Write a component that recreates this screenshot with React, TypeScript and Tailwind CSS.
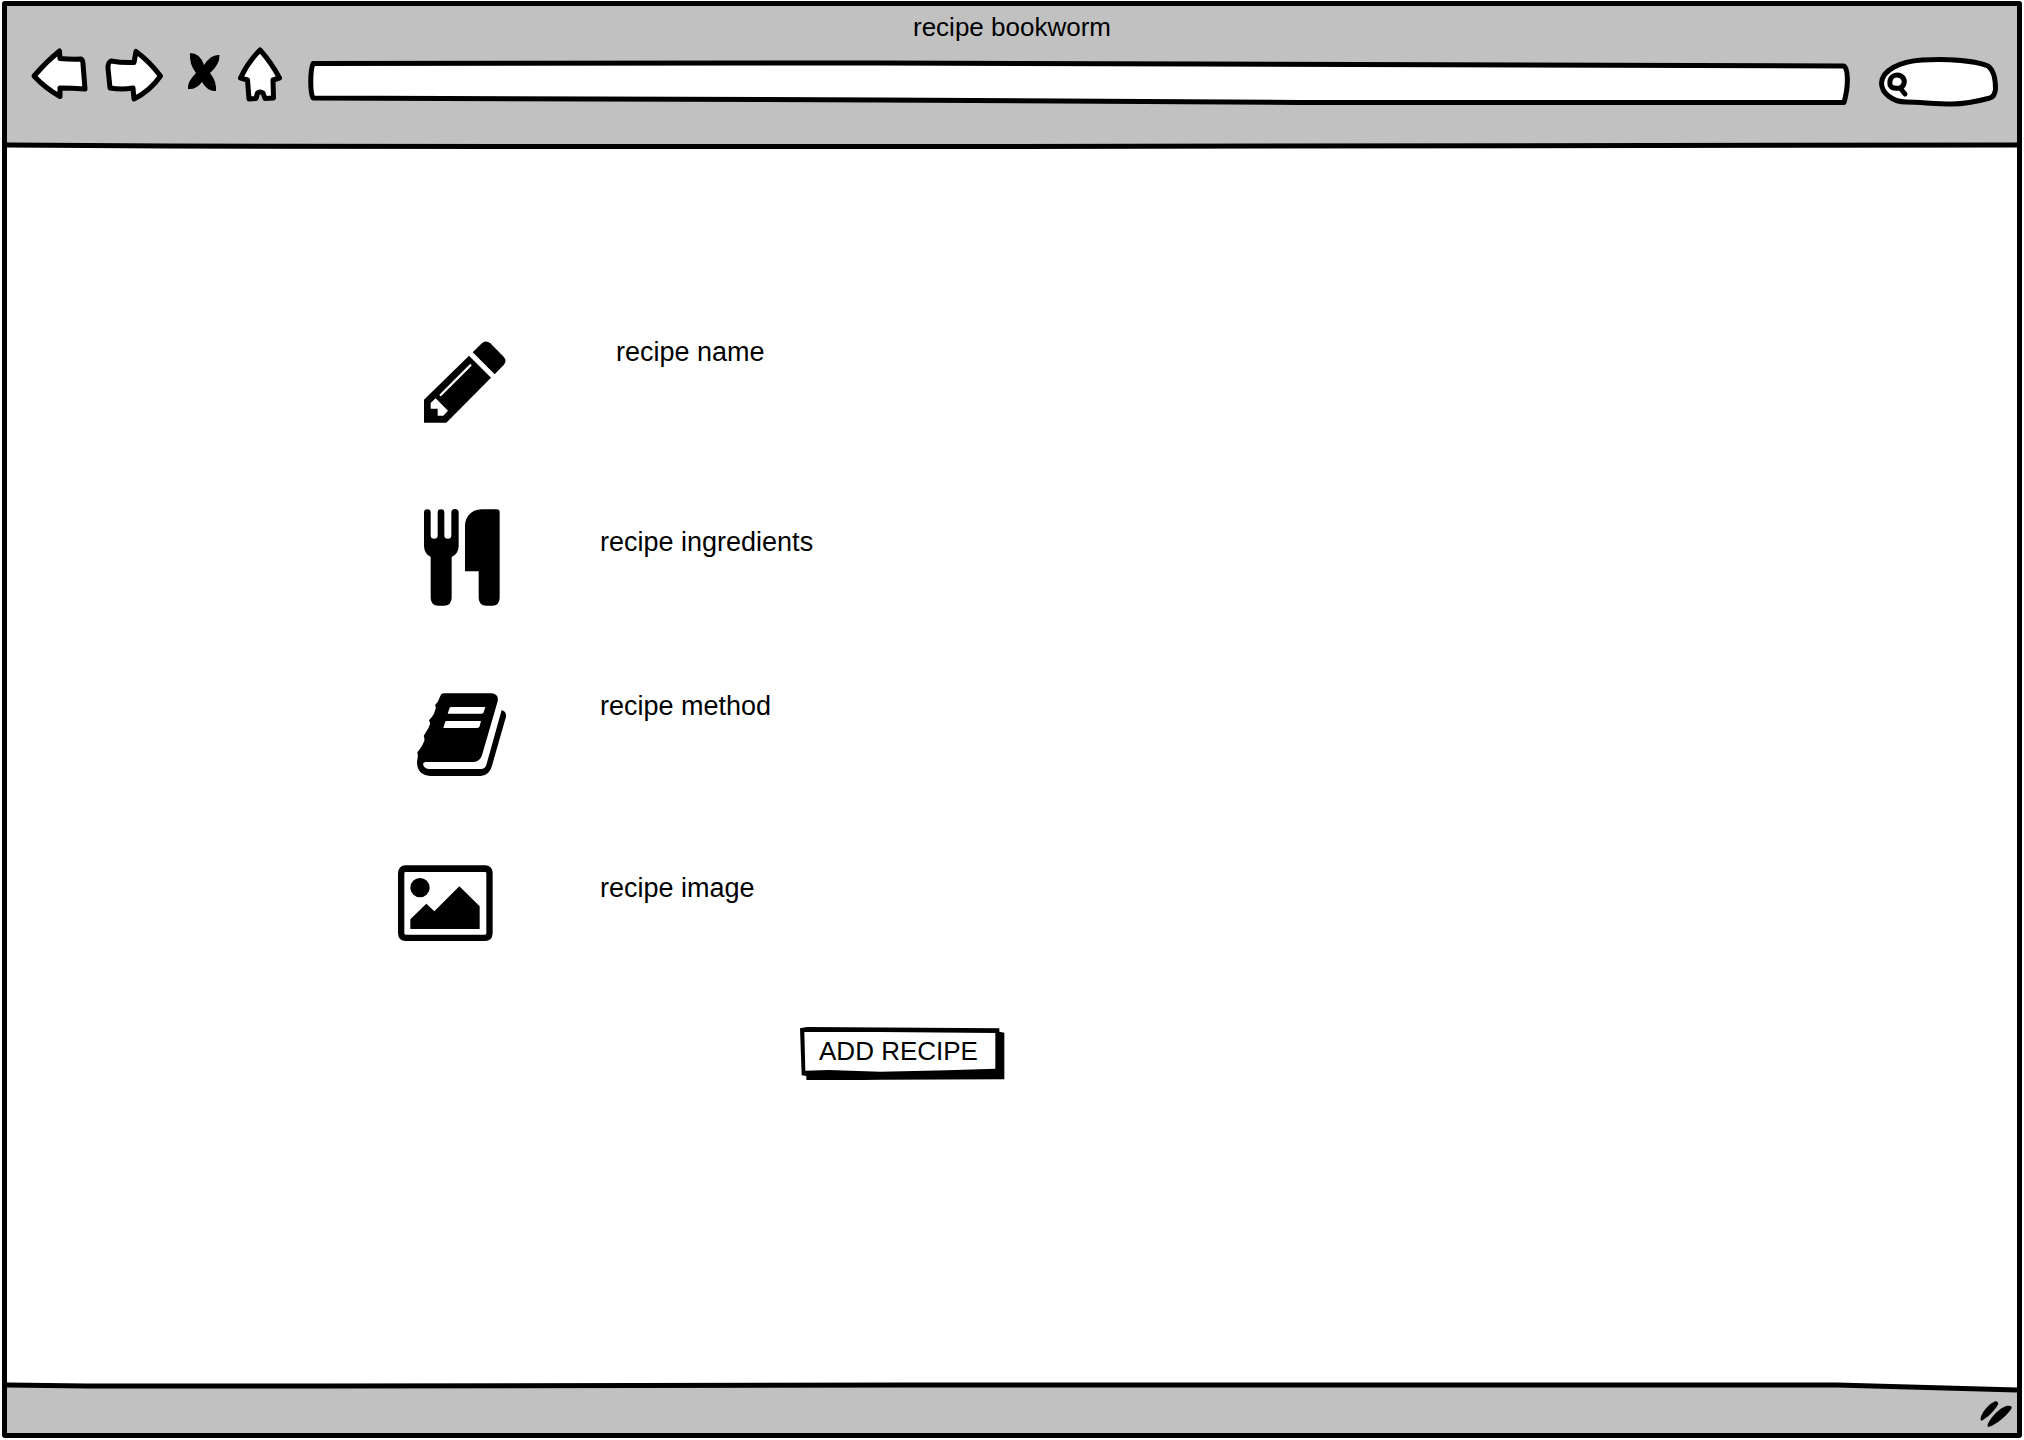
import type { ReactNode } from "react";

const outline = {
  fill: "#fff",
  stroke: "#000",
  strokeWidth: 5,
  strokeLinejoin: "round" as const,
  strokeLinecap: "round" as const,
};

function ToolButton({ label, children }: { label: string; children: ReactNode }) {
  return (
    <button type="button" aria-label={label} className="block shrink-0 cursor-pointer">
      {children}
    </button>
  );
}

function TitleBar() {
  return (
    <header className="relative h-[143px] bg-[#c1c1c1] pt-[11px]">
      <svg
        aria-hidden="true"
        className="absolute inset-x-0 bottom-0 h-2 w-full"
        viewBox="0 0 2010 8"
        preserveAspectRatio="none"
      >
        <path d="M0 4 L160 5 L500 5.500 L1000 5.500 L2010 4 V8 H0Z" fill="#fff" />
        <path d="M0 4 L160 5 L500 5.500 L1000 5.500 L2010 4" fill="none" stroke="#000" strokeWidth="5" />
      </svg>
      <h1 className="text-center text-[26px] leading-5">recipe bookworm</h1>
      <div className="mt-[9px] flex gap-3 pl-[23px] pr-[15px]">
        <ToolButton label="Back">
          <svg className="h-[60px] w-[62px]" viewBox="30 46 62 60">
            <path {...outline} d="M34 75 Q46 61 59.500 50 L60 57.500 Q71 58.500 81 58 Q83 59 83 63 L85 88 Q72 87 60 87 L60 95.500 Q45 87 34 75Z" />
          </svg>
        </ToolButton>
        <ToolButton label="Forward">
          <svg className="h-[60px] w-[64px]" viewBox="104 46 64 60">
            <path {...outline} d="M160.500 75 Q149 60 136 50.500 L134 61.500 Q122 62 111 60 Q108 61 108 67 L110 87 Q122 89 133 87 L134 98 Q150 90 160.500 75Z" />
          </svg>
        </ToolButton>
        <ToolButton label="Stop">
          <svg className="h-[60px] w-[46px]" viewBox="180 46 46 60">
            <path d="M190 52 Q200 52 204 64 Q211 53 219.500 54 Q220 63 210 72 Q217 81 216 90 Q208 91 202 81 Q196 89 188 88 Q187 81 196 72 Q189 63 190 52Z" />
          </svg>
        </ToolButton>
        <ToolButton label="Home">
          <svg className="h-[60px] w-[56px]" viewBox="238 46 56 60">
            <path {...outline} d="M260 49 Q248 61 240.500 77 L247.500 79 L249 98 L256 97.500 L257.500 92 Q260.500 90 263 92 L265 97.500 L273.500 97 L273 79 L279.500 77 Q271 61 260 49Z" />
          </svg>
        </ToolButton>
        <div className="relative h-[60px] min-w-0 flex-1">
          <svg
            aria-hidden="true"
            className="absolute inset-0 h-full w-full"
            viewBox="306 46 1548 60"
            preserveAspectRatio="none"
          >
            <path {...outline} d="M313 63.500 L880 63 L1200 64 L1844 66 C1848 69 1849 85 1844 102.500 L1300 102.500 L880 100 L313 98 C310 92 310 72 313 63.500Z" />
          </svg>
          <input
            type="text"
            aria-label="Address"
            className="absolute inset-x-3 top-5 h-8 bg-transparent text-[26px] outline-none"
          />
        </div>
        <div className="relative h-[62px] w-[136px] shrink-0">
          <svg aria-hidden="true" className="absolute inset-0 h-full w-full" viewBox="1866 46 136 62">
            <path {...outline} d="M1906 102 C1894 102 1881.500 94 1881.500 83 C1882 70 1900 61.500 1922 60 C1950 58.500 1975 61 1988 66 C1995 71 1995.500 81 1995.500 89 C1995 95 1993 97 1990 98 C1975 102 1965 104 1952 104 C1935 104 1920 102 1906 102Z" />
            <path {...outline} d="M1900 88 C1892 89 1889 87 1890 81 C1891 75 1897 74 1901 76 C1906 79 1905 86 1900 88 L1905 94" />
          </svg>
          <input
            type="search"
            aria-label="Search"
            className="absolute left-12 top-5 h-8 w-[70px] bg-transparent text-[20px] outline-none"
          />
        </div>
      </div>
    </header>
  );
}

function PencilIcon() {
  return (
    <svg aria-hidden="true" className="h-[82px] w-[82px]" viewBox="72 61 246 246">
      <path d="M72 237 L207 105 L273 171 L139 306 H72Z" />
      <path d="M218 95 L244 69 Q257 57 271 68 L311 108 Q322 120 311 133 L284 161Z" />
      <path d="M92 247 L107 233 L144 270 L130 285 H113 V264 H92Z" fill="#fff" />
      <path d="M122 223 L211 134" stroke="#fff" strokeWidth="7" strokeLinecap="round" />
    </svg>
  );
}

function CutleryIcon() {
  return (
    <svg aria-hidden="true" className="h-[97px] w-[76px]" viewBox="72 55 228 291">
      <path d="M72 66 a10 10 0 0 1 20 0 V134 a10.500 10.500 0 0 0 21 0 V66 a10 10 0 0 1 20 0 V134 a10.500 10.500 0 0 0 21 0 V66 a11 11 0 0 1 22 0 V167 Q175 190 155 199 V322 Q154 345 132 345 H115 Q93 345 92 322 V199 Q73 189 72 167Z" />
      <path d="M195 104 C196 77 216 57 244 56 H290 Q299 56 299 65 V322 Q298 345 277 345 H259 Q237 345 236 322 V242 H195Z" />
    </svg>
  );
}

function BookIcon() {
  return (
    <svg aria-hidden="true" className="h-[83px] w-[90px]" viewBox="51 39 270 249">
      <path d="M133 40 H276 Q297 43 293 64 L246 226 Q240 245 220 246 H76 Q67 247 70 256 Q74 267 88 267 H243 Q255 267 259 255 L305 90 Q320 95 318 110 L276 257 Q268 286 242 288 H91 Q51 285 51 246 L53 232 Q54 224 52 217 L59 208 Q68 196 73 182 Q74 174 71 168 L78 156 Q87 144 90 132 Q90 126 87 121 L95 112 Q103 102 107 86 Q108 80 105 75 L113 66 L120 50 Q124 39 133 40Z" />
      <path d="M153 81 H256 L251 97 Q250 101 245 101 H143 L148 86 Q149 81 153 81Z M140 123 H243 L239 139 Q237 144 232 144 H130 L135 127 Q136 123 140 123Z" fill="#fff" />
    </svg>
  );
}

function PictureIcon() {
  return (
    <svg aria-hidden="true" className="h-[76px] w-[95px]" viewBox="54 42 285 228">
      <path
        fillRule="evenodd"
        d="M77 43 H315 Q338 44 338 67 V247 Q337 270 315 270 H77 Q55 270 54 247 V67 Q55 44 77 43Z M77 63 Q73 63 73 67 V247 Q73 251 77 251 H315 Q319 251 319 247 V67 Q319 63 315 63Z"
      />
      <circle cx="120" cy="110" r="29" />
      <path d="M91 205 L139 158 L163 181 L238 106 L299 166 V234 H91Z" />
    </svg>
  );
}

const fields = [
  { label: "recipe name", icon: <PencilIcon />, row: "h-[82px]", iconPad: "pl-[26px]", text: "pl-4" },
  { label: "recipe ingredients", icon: <CutleryIcon />, row: "h-[98px]", iconPad: "pl-[26px]", text: "pt-[22px]" },
  { label: "recipe method", icon: <BookIcon />, row: "h-[86px]", iconPad: "pl-[19px]", text: "pt-[2px]" },
  { label: "recipe image", icon: <PictureIcon />, row: "h-[76px]", iconPad: "pl-0", text: "pt-3" },
];

function StatusBar() {
  return (
    <footer className="relative flex h-[51px] items-center justify-end bg-[#c1c1c1] pr-[5px]">
      <svg
        aria-hidden="true"
        className="absolute inset-x-0 top-0 h-3 w-full"
        viewBox="0 0 2010 12"
        preserveAspectRatio="none"
      >
        <path d="M0 0 H2010 V7 L1870 4 H0Z" fill="#fff" />
        <path d="M0 3 L80 4 L320 4 L900 3 L1830 3 L2010 8" fill="none" stroke="#000" strokeWidth="5" />
      </svg>
      <svg aria-hidden="true" className="mt-3 h-[26px] w-[32px]" viewBox="602 126 96 78">
        <path d="M604 184 C600 168 630 131 649 127 Q658 127 656 136 C649 153 622 178 607 185Z" />
        <path d="M625 203 C620 190 660 143 685 140 Q698 139 697 147 C688 166 646 201 628 203Z" />
      </svg>
    </footer>
  );
}

export default function App() {
  return (
    <div className="flex min-h-screen bg-white px-[2px] pb-[2px] pt-px font-['Liberation_Sans',Arial,sans-serif] text-black">
      <div className="flex min-w-0 flex-1 flex-col rounded-[3px] border-[5px] border-black">
        <TitleBar />
        <main className="flex-1 pl-[391px] pt-[192px]">
          <ul className="flex flex-col gap-[86px]">
            {fields.map((field) => (
              <li key={field.label} className={`flex items-start ${field.row}`}>
                <div className={`w-[202px] shrink-0 ${field.iconPad}`}>{field.icon}</div>
                <p className={`text-[27px] leading-[22px] ${field.text}`}>{field.label}</p>
              </li>
            ))}
          </ul>
          <button
            type="button"
            className="relative ml-[402px] mt-[86px] block h-[53px] w-[205px] cursor-pointer pb-1.5 pr-2 text-[26px] leading-8"
          >
            <svg aria-hidden="true" className="absolute inset-0 h-full w-full" viewBox="59 49 615 159">
              <path d="M59 53 L80 49 L657 53 V63 L672 66 V206 L300 207 L145 210 L78 209 V196 L64 194Z" />
              <path d="M72 64 L300 64 L645 67 V174 L500 179 L300 183 L145 178 L75 180Z" fill="#fff" />
            </svg>
            <span className="relative">ADD RECIPE</span>
          </button>
        </main>
        <StatusBar />
      </div>
    </div>
  );
}
